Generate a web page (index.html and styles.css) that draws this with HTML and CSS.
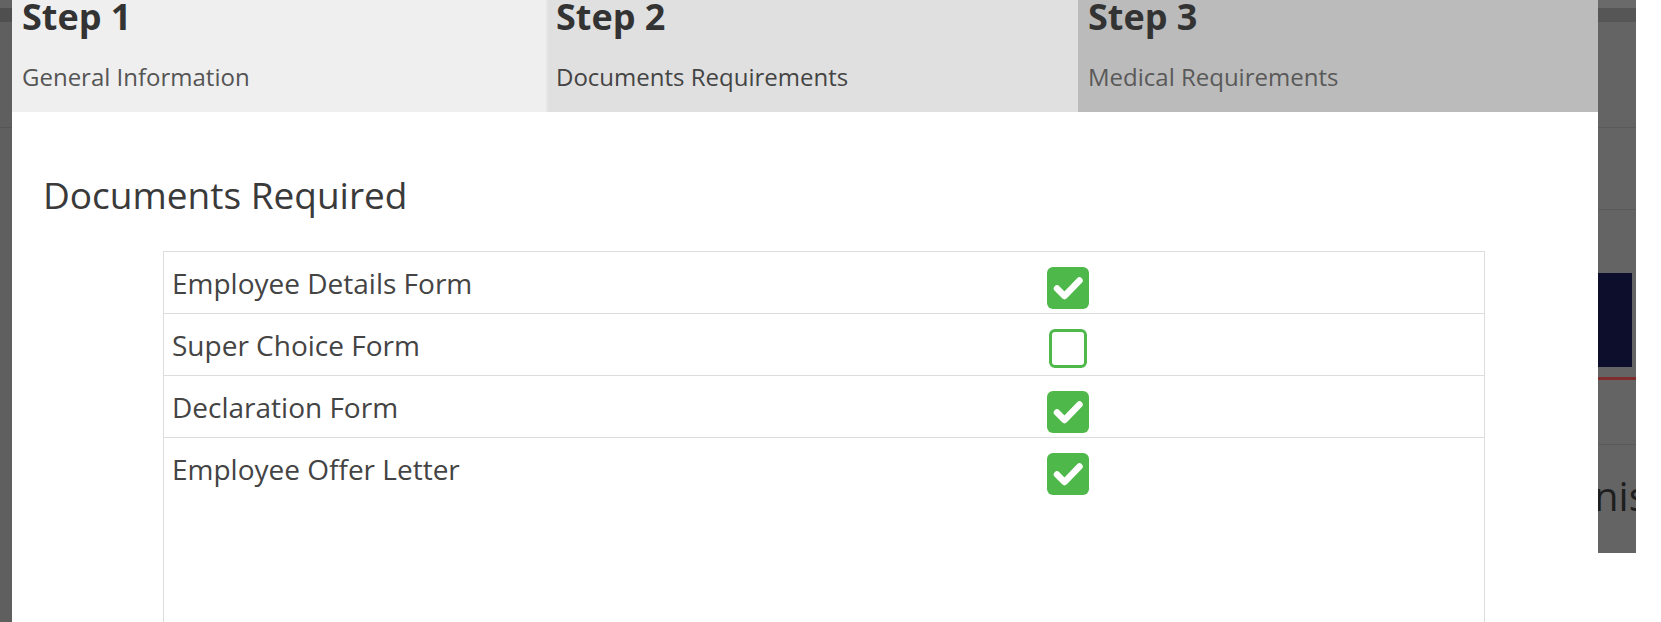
FILE: index.html
```html
<!DOCTYPE html>
<html lang="en">
<head>
<meta charset="utf-8">
<title>Documents Requirements</title>
<link rel="stylesheet" href="styles.css">
</head>
<body>
<div class="page">
  <div class="backdrop-left">
    <div class="bl-top"></div>
    <div class="bl-band"></div>
    <div class="bl-mid"></div>
    <div class="bl-line"></div>
    <div class="bl-rest"></div>
  </div>

  <div class="modal">
    <div class="steps">
      <div class="step step-1">
        <h3 class="step-title">Step 1</h3>
        <p class="step-sub">General Information</p>
      </div>
      <div class="step step-2">
        <h3 class="step-title">Step 2</h3>
        <p class="step-sub">Documents Requirements</p>
      </div>
      <div class="step step-3">
        <h3 class="step-title">Step 3</h3>
        <p class="step-sub">Medical Requirements</p>
      </div>
    </div>

    <div class="modal-body">
      <h2 class="section-title">Documents Required</h2>
      <table class="doc-table">
        <tbody>
          <tr>
            <td class="doc-name">Employee Details Form</td>
            <td class="doc-check"><span class="cb cb-on"><svg viewBox="0 0 42 42" width="42" height="42"><path d="M10 21.5 L17.5 29 L32.5 13.5" fill="none" stroke="#fff" stroke-width="6.5" stroke-linecap="round" stroke-linejoin="round"/></svg></span></td>
          </tr>
          <tr>
            <td class="doc-name">Super Choice Form</td>
            <td class="doc-check"><span class="cb cb-off"></span></td>
          </tr>
          <tr>
            <td class="doc-name">Declaration Form</td>
            <td class="doc-check"><span class="cb cb-on"><svg viewBox="0 0 42 42" width="42" height="42"><path d="M10 21.5 L17.5 29 L32.5 13.5" fill="none" stroke="#fff" stroke-width="6.5" stroke-linecap="round" stroke-linejoin="round"/></svg></span></td>
          </tr>
          <tr class="last-row">
            <td class="doc-name">Employee Offer Letter</td>
            <td class="doc-check"><span class="cb cb-on"><svg viewBox="0 0 42 42" width="42" height="42"><path d="M10 21.5 L17.5 29 L32.5 13.5" fill="none" stroke="#fff" stroke-width="6.5" stroke-linecap="round" stroke-linejoin="round"/></svg></span></td>
          </tr>
        </tbody>
      </table>
    </div>
  </div>

  <div class="backdrop-right">
    <div class="br-top"></div>
    <div class="br-band"></div>
    <div class="br-seg br-seg-a"></div>
    <div class="br-line"></div>
    <div class="br-seg br-seg-b"></div>
    <div class="br-line"></div>
    <div class="br-seg br-seg-c"></div>
    <div class="br-navy"></div>
    <div class="br-seg br-seg-d"></div>
    <div class="br-red"></div>
    <div class="br-seg br-seg-e"></div>
    <div class="br-line"></div>
    <div class="br-text">nis</div>
  </div>
</div>
</body>
</html>
```

FILE: styles.css
```css
html, body {
  margin: 0;
  padding: 0;
  background: #ffffff;
}

.page {
  display: flex;
  align-items: flex-start;
  width: 1661px;
  height: 622px;
  overflow: hidden;
  font-family: "Open Sans", "Liberation Sans", sans-serif;
  color: #333;
}

/* dimmed page behind the modal, left side */
.backdrop-left {
  width: 12px;
  height: 622px;
  flex: 0 0 12px;
  display: flex;
  flex-direction: column;
  background: #5f5f5f;
}
.bl-top { height: 8px; background: #636363; }
.bl-band { height: 14px; background: #4f4f4f; }
.bl-mid { height: 105px; }
.bl-line { height: 1px; background: #555; }
.bl-rest { flex: 1; }

/* modal */
.modal {
  width: 1586px;
  flex: 0 0 1586px;
  height: 622px;
  background: #fff;
}

.steps {
  display: grid;
  grid-template-columns: 534px 530px 522px;
  height: 112px;
}

.step {
  box-sizing: border-box;
  padding: 2px 0 0 10px;
}
.step-1 { background: #efefef; }
.step-2 { background: #e0e0e0; border-left: 2px solid #e7e7e7; padding-left: 8px; }
.step-3 { background: #bbbbbb; border-left: 2px solid #e0e0e0; padding-left: 10px; }

.step-title {
  margin: 0;
  font-size: 36px;
  font-weight: 700;
  line-height: 30px;
  color: #333;
}

.step-sub {
  margin: 29px 0 0;
  font-size: 24px;
  line-height: 32px;
  color: #555;
}
.step-2 .step-sub { color: #444; }
.step-3 .step-sub { color: #595959; }

.modal-body {
  padding: 58px 0 0 31px;
}

.section-title {
  margin: 0;
  font-size: 37px;
  font-weight: 400;
  line-height: 49px;
  color: #3a3a3a;
}

.doc-table {
  margin: 32px 0 0 120px;
  width: 1322px;
  border-collapse: collapse;
  border: 1px solid #dddddd;
}

.doc-table td {
  border-top: 1px solid #dddddd;
  vertical-align: top;
}

.doc-name {
  width: 877px;
  box-sizing: border-box;
  padding: 12px 6px 11px 8px;
  font-size: 28px;
  line-height: 38px;
  color: #444;
}

.doc-check {
  padding: 15px 8px 4px 6px;
  height: 42px;
}

.last-row td {
  height: 260px;
}

.cb {
  display: block;
  box-sizing: border-box;
  border-radius: 6px;
}
.cb svg { display: block; }
.cb-on {
  width: 42px;
  height: 42px;
  background: #4fb84a;
}
.cb-off {
  width: 38px;
  height: 39px;
  margin-left: 2px;
  border: 3px solid #4fb84a;
  background: #fff;
}

/* dimmed page behind the modal, right side */
.backdrop-right {
  width: 38px;
  flex: 0 0 38px;
  height: 553px;
  display: flex;
  flex-direction: column;
  background: #646464;
  overflow: hidden;
}
.br-top { height: 8px; background: #6a6a6a; }
.br-band { height: 14px; background: #565656; }
.br-seg-a { height: 105px; }
.br-line { height: 1px; background: #5a5a5a; }
.br-seg-b { height: 81px; }
.br-seg-c { height: 63px; }
.br-navy { height: 94px; width: 34px; background: #0c0e2b; }
.br-seg-d { height: 10px; }
.br-red { height: 3px; background: #7e2c2c; }
.br-seg-e { height: 64px; }
.br-text {
  margin-top: 26px;
  margin-left: -4px;
  font-size: 40px;
  line-height: 50px;
  color: #1e1e1e;
  white-space: nowrap;
}
```
